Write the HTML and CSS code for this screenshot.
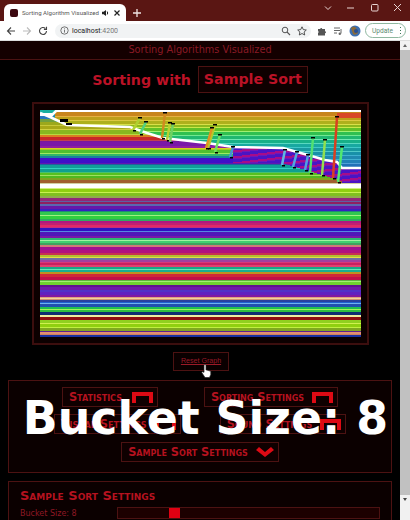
FILE: index.html
```html
<!DOCTYPE html>
<html lang="en">
<head>
  <meta charset="UTF-8" />
  <title>Sorting Algorithm Visualized</title>
  <link rel="stylesheet" href="styles.css">
</head>
<body>
  <div class="tabbar">
    <div class="tab">
      <span class="favicon"></span>
      <span class="tab-title">Sorting Algorithm Visualized</span>
      <svg class="tab-audio" width="8" height="8" viewBox="0 0 8 8"><path d="M0 2.8h1.6L4 1v6L1.6 5.200H0z" fill="#222"/><path d="M5.200 2.500q1 1.500 0 3" stroke="#222" fill="none"/></svg>
      <svg class="tab-close" width="8" height="8" viewBox="0 0 8 8"><path d="M1.500 1.500l5 5M6.500 1.500l-5 5" stroke="#222" stroke-width="1.200"/></svg>
    </div>
    <svg class="new-tab" width="10" height="10" viewBox="0 0 10 10"><path d="M5 1v8M1 5h8" stroke="#f0e4e2" stroke-width="1.300"/></svg>
    <div class="window-btns">
      <svg width="10" height="10" viewBox="0 0 10 10"><path d="M2 3.500l3 3 3-3" stroke="#e8d4d2" fill="none"/></svg>
      <svg width="10" height="10" viewBox="0 0 10 10"><path d="M1 5h7" stroke="#e8d4d2"/></svg>
      <svg width="10" height="10" viewBox="0 0 10 10"><rect x="1.500" y="1.500" width="6.500" height="6.500" rx="1" stroke="#e8d4d2" fill="none"/></svg>
      <svg width="10" height="10" viewBox="0 0 10 10"><path d="M1 1l7 7M8 1L1 8" stroke="#e8d4d2"/></svg>
    </div>
  </div>

  <div class="toolbar">
    <svg width="10" height="10" viewBox="0 0 10 10"><path d="M9 5H1.500M5 1.500L1.500 5 5 8.500" stroke="#444" stroke-width="1.100" fill="none"/></svg>
    <svg width="10" height="10" viewBox="0 0 10 10"><path d="M1 5h7.500M5 1.500L8.500 5 5 8.500" stroke="#bbb" stroke-width="1.100" fill="none"/></svg>
    <svg width="10" height="10" viewBox="0 0 10 10"><path d="M8.500 5A3.500 3.500 0 1 1 7.400 2.400M8.500 0.800v2.600H5.900" stroke="#444" stroke-width="1.100" fill="none"/></svg>
    <div class="omnibox">
      <svg width="9" height="9" viewBox="0 0 9 9"><circle cx="4.500" cy="4.500" r="3.700" stroke="#555" fill="none" stroke-width=".8"/><path d="M4.500 4v2.600M4.500 2.400v1" stroke="#555" stroke-width=".8"/></svg>
      <span class="url">localhost<span class="url-port">:4200</span></span>
      <svg class="omni-right" width="10" height="10" viewBox="0 0 10 10"><circle cx="4" cy="4" r="2.800" stroke="#555" fill="none"/><path d="M6 6l3 3" stroke="#555" stroke-width="1.100"/></svg>
      <svg width="10" height="10" viewBox="0 0 10 10"><path d="M5 .8l1.300 2.800 3 .4-2.200 2 .6 3L5 7.500 2.300 9l.6-3L.7 4l3-.4z" stroke="#444" fill="none" stroke-width=".9"/></svg>
    </div>
    <svg width="10" height="10" viewBox="0 0 10 10"><path d="M1 3h2.200a1 1 0 0 1 2 0H8v2.200a1 1 0 0 1 0 2V9.500H1V7a1.100 1.100 0 0 0 0-2z" fill="#555"/></svg>
    <svg width="10" height="10" viewBox="0 0 10 10"><path d="M1 2h6M1 4.500h6M1 7h3" stroke="#666"/><path d="M8 3v4.500" stroke="#666"/><circle cx="6.800" cy="7.800" r="1.200" fill="#666"/></svg>
    <svg width="12" height="12" viewBox="0 0 12 12"><circle cx="6" cy="6" r="5.500" fill="#3d6fb0"/><path d="M2 3q3-3 5 0t2 5q-3 3-5 1z" fill="#8a6a3a"/><circle cx="7" cy="6" r="2" fill="#2a4f90"/></svg>
    <div class="update">Update<span class="update-dots"></span></div>
  </div>

  <div class="viewport">
    <div class="page">
      <div class="site-title">Sorting Algorithms Visualized</div>

      <h1 class="sort-heading">Sorting with <span class="sort-name">Sample Sort</span></h1>

      <div class="graph-frame">
        <canvas id="graph" width="321" height="227"></canvas>
      </div>

      <div class="reset-row">
        <a class="reset-btn" href="#">Reset Graph</a>
      </div>

      <div class="panel toggles">
        <div class="toggle-row">
          <button class="toggle stats">Statistics <svg class="up" viewBox="0 0 21 11"><path d="M0 11V0h21v11h-4V4H4v7z"/></svg></button>
          <button class="toggle">Sorting Settings <svg class="up" viewBox="0 0 21 11"><path d="M0 11V0h21v11h-4V4H4v7z"/></svg></button>
        </div>
        <div class="toggle-row wide">
          <button class="toggle">Visual Settings <svg class="up" viewBox="0 0 21 11"><path d="M0 11V0h21v11h-4V4H4v7z"/></svg></button>
          <button class="toggle">Sound Settings <svg class="up" viewBox="0 0 21 11"><path d="M0 11V0h21v11h-4V4H4v7z"/></svg></button>
        </div>
        <div class="toggle-row">
          <button class="toggle">Sample Sort Settings <svg class="down" viewBox="0 0 18 10"><path d="M0 3l3-3 6 5 6-5 3 3-9 7z"/></svg></button>
        </div>
      </div>

      <div class="panel settings">
        <h3>Sample Sort Settings</h3>
        <div class="setting-row">
          <label>Bucket Size: 8</label>
          <div class="slider"><div class="thumb"></div></div>
        </div>
      </div>

      <div class="caption">Bucket Size: 8</div>
      <svg class="hand" width="11" height="14" viewBox="0 0 11 14"><path d="M3 1.500a1 1 0 0 1 2 0V6h.8l4 1.300v3.200L8.500 13.500H4L.7 8.500q.6-1.200 2.300-.2z" fill="#fff" stroke="#222" stroke-width=".7"/></svg>
    </div>

    <div class="scrollbar">
      <span class="arrow-up"></span>
      <div class="scroll-thumb"></div>
      <span class="arrow-down"></span>
    </div>
  </div>

  <script src="graph.js"></script>
</body>
</html>
```

FILE: styles.css
```css
* { box-sizing: border-box; }

html, body {
  height: 100%;
}

body {
  margin: 0;
  overflow: hidden;
  background: #000;
  font-family: 'DejaVu Sans', sans-serif;
  display: flex;
  flex-direction: column;
}

/* browser chrome */
.tabbar {
  height: 21px;
  flex: none;
  background: #5a1613;
  display: flex;
  align-items: flex-end;
  padding-left: 4px;
}

.tab {
  width: 122px;
  height: 17px;
  background: #fff;
  border-radius: 6px 6px 0 0;
  display: flex;
  align-items: center;
  padding-left: 6px;
}

.favicon {
  width: 8px;
  height: 8px;
  background: #3c0810;
  border-radius: 2px;
  margin-right: 4px;
}

.tab-title {
  font: 6.100px Roboto, sans-serif;
  color: #555;
  width: 80px;
  white-space: nowrap;
}

.tab-audio { margin-right: 3px; }

.new-tab {
  margin: 0 0 3px 6px;
}

.window-btns {
  margin-left: auto;
  align-self: flex-start;
  display: flex;
  gap: 13.500px;
  padding: 3px 7px 0 0;
}

.toolbar {
  height: 20px;
  flex: none;
  background: #fff;
  display: flex;
  align-items: center;
  gap: 6px;
  padding: 0 0 0 6px;
  border-bottom: 1px solid #ddd;
}

.toolbar > * {
  flex: none;
}

.omnibox {
  width: 256px;
  height: 14px;
  margin: 0 0 0 1px;
  padding: 0 4px 0 5px;
  background: #f1f3f4;
  border-radius: 7px;
  display: flex;
  align-items: center;
  gap: 3px;
}

.url {
  font: 7px Roboto, sans-serif;
  color: #222;
}

.url-port { color: #777; }

.omni-right { margin-left: auto; margin-right: 3px; }

.update {
  width: 41px;
  height: 15px;
  margin-left: -2px;
  border: 1px solid #8fb8a0;
  border-radius: 8px;
  font: 6.600px Roboto, sans-serif;
  color: #5a8a70;
  display: flex;
  align-items: center;
  padding-left: 6px;
}

.update-dots {
  width: 1.500px;
  height: 1.500px;
  margin-left: auto;
  margin-right: 4px;
  background: #3a7a58;
  box-shadow: 0 -3px #3a7a58, 0 3px #3a7a58;
}

/* page */
.viewport {
  flex: 1;
  min-height: 0;
  display: flex;
}

.page {
  position: relative;
  flex: 1;
  min-width: 0;
  background: #000;
  overflow: hidden;
}

.site-title {
  height: 19px;
  background: #140000;
  border-bottom: 1px solid #4c1212;
  text-align: center;
  font-size: 9.750px;
  line-height: 18px;
  color: #8a1a25;
}

.sort-heading {
  margin: 6px 0 9px;
  height: 27px;
  display: flex;
  justify-content: center;
  align-items: center;
  font-size: 14.200px;
  font-weight: bold;
  color: #bb1226;
  white-space: pre;
}

.sort-name {
  height: 27px;
  line-height: 25px;
  margin-left: 2px;
  padding: 0 5px;
  background: #0e0000;
  border: 1px solid #4c1212;
}

.graph-frame {
  width: 337px;
  margin: 0 auto;
  padding: 6px;
  background: #0c0000;
  border: 2px solid #3c0e0e;
}

#graph {
  display: block;
  filter: blur(0.35px);
}

.reset-row {
  display: flex;
  justify-content: center;
  margin-top: 7px;
  padding-left: 2px;
}

.reset-btn {
  width: 56px;
  height: 19px;
  border: 1px solid #4c1212;
  background: #0a0000;
  text-align: center;
  font: 7.100px/17px 'Liberation Sans', sans-serif;
  color: #9a1a28;
}

.panel {
  margin: 0 8px;
  background: #0b0000;
  border: 1px solid #4c1212;
}

.toggles {
  margin-top: 9px;
  height: 93px;
  padding-top: 6px;
}

.toggle-row {
  display: flex;
  justify-content: center;
  gap: 46px;
  margin-bottom: 7px;
}

.toggle-row.wide {
  gap: 39px;
  margin-bottom: 8px;
}

.toggle {
  height: 20px;
  padding: 0 4px 0 6px;
  display: flex;
  align-items: center;
  justify-content: space-between;
  gap: 8px;
  background: #0f0000;
  border: 1px solid #4c1212;
  font-family: 'DejaVu Sans', sans-serif;
  font-size: 11.400px;
  font-weight: bold;
  font-variant: small-caps;
  color: #b5121f;
  white-space: nowrap;
}

.toggle.stats { min-width: 96px; }
.wide .toggle { min-width: 126px; }

.toggle svg {
  fill: #dd0a14;
  flex: none;
}

.up { width: 21px; height: 11px; }
.down { width: 18px; height: 10px; }

.settings {
  margin-top: 8px;
  height: 60px;
  padding: 6px 11px;
}

.settings h3 {
  margin: 0 0 4px;
  font-size: 13px;
  line-height: 15px;
  font-weight: bold;
  font-variant: small-caps;
  color: #b5121f;
}

.setting-row {
  display: flex;
  align-items: center;
}

.setting-row label {
  width: 97px;
  font-size: 8px;
  color: #8e1824;
}

.slider {
  flex: 1;
  height: 12px;
  background: #1c0000;
  border: 1px solid #4c1212;
}

.thumb {
  width: 11px;
  height: 10px;
  margin-left: 51px;
  background: #e00012;
}

/* over the content */
.caption {
  position: absolute;
  left: 0;
  right: -11px;
  top: 349px;
  text-align: center;
  font-size: 45.800px;
  line-height: 56px;
  font-weight: bold;
  color: #fff;
  white-space: nowrap;
}

.hand {
  position: absolute;
  left: 201px;
  top: 323px;
}

.scrollbar {
  width: 10px;
  flex: none;
  background: #f1f1f1;
  display: flex;
  flex-direction: column;
  align-items: center;
}

.arrow-up, .arrow-down {
  flex: none;
  width: 0;
  height: 0;
  margin: 3px 0;
  border-left: 2.500px solid transparent;
  border-right: 2.500px solid transparent;
}

.arrow-up { border-bottom: 3px solid #666; }
.arrow-down { border-top: 3px solid #444; }

.scroll-thumb {
  width: 100%;
  height: 445px;
  background: #c1c1c1;
}
```

FILE: graph.js
```js
// rows of the bars as [height, colour]
const sortedRows = [
  [2, '#ffffff'], [4, '#c8851c'], [1, '#e6b040'], [3, '#bda01a'], [1, '#dcc840'],
  [3, '#aeb01c'], [1, '#d8e048'], [2, '#8cb81c'], [1, '#c8e848'], [3, '#60c028'],
  [1, '#a0f070'], [3, '#30c050'], [1, '#70e890'], [3, '#20b870'], [1, '#70e8b0'],
  [3, '#18b088'], [1, '#58d8c0'], [3, '#18a8a0'], [1, '#40c8c8'], [3, '#1898a0'],
  [1, '#50c8c8'], [3, '#1890a8'], [1, '#40b0d0'], [3, '#2088b0'], [1, '#40b0d0'],
  [3, '#2080b8'], [1, '#50a0d8'], [3, '#2070b8'], [1, '#40b0c8'], [3, '#1890a0'],
  [1, '#40d0a8'], [3, '#18a080']
];

const baseRows = [
  [12, '#1a90a8'], [3, '#9ca81c'], [1, '#c8c838'], [3, '#a8a818'], [1, '#d0d040'],
  [4, '#88b820'], [1, '#b8d840'], [2, '#d88020'], [3, '#c82828'], [1, '#c04050'],
  [1, '#7818a0'], [4, '#7a18a8'], [2, '#9020a0'], [1, '#d8d020'], [1, '#a8c820'],
  [3, '#50c030'], [1, '#a0e860'], [2, '#30b868'], [2, '#1880a0'], [5, '#4010c8'],
  [1, '#6018b0'], [1, '#2060a0'], [3, '#10a098'], [1, '#30d0c0'], [3, '#10a090'],
  [1, '#48c070'], [2, '#58c020'], [1, '#a0e060'], [2, '#50b820'], [2, '#80a020'],
  [3, '#a06030'], [1, '#d0d0a0'], [4, '#ffffff'], [1, '#d0f080'], [3, '#90d010'],
  [1, '#c8f050'], [3, '#80c020'], [2, '#90a850'], [3, '#902878'], [1, '#6060a0'],
  [2, '#902060'], [2, '#5868b0'], [3, '#6818a8'], [2, '#3820c0'], [1, '#208878'],
  [3, '#30c850'], [1, '#a0f080'], [3, '#30d040'], [2, '#30a860'], [2, '#b01880'],
  [2, '#c02070'], [2, '#e02868'], [1, '#c03080'], [3, '#3010c0'], [1, '#5888e0'],
  [4, '#5018b8'], [2, '#7818a8'], [2, '#30b870'], [1, '#a0f0a0'], [2, '#40d070'],
  [2, '#40a060'], [2, '#d07878'], [3, '#a01090'], [3, '#b01080'], [2, '#c83050'],
  [2, '#b0c030'], [1, '#e0e040'], [2, '#7070a0'], [2, '#a040a0'], [1, '#d83878'],
  [2, '#c82060'], [2, '#e04070'], [2, '#18a888'], [1, '#60e8b0'], [2, '#18b090'],
  [2, '#c09020'], [3, '#d02838'], [3, '#c01048'], [1, '#60b040'], [1, '#a0f070'],
  [3, '#70d030'], [2, '#601090'], [3, '#7018a8'], [2, '#5030c8'], [3, '#6020c0'],
  [2, '#8018a0'], [1, '#e0a080'], [1, '#f0d0a0'], [1, '#d09070'], [2, '#2840a0'],
  [1, '#2060d0'], [1, '#70b0f0'], [3, '#2050b0'], [2, '#20c050'], [1, '#a0f060'],
  [2, '#30c040'], [3, '#103070'], [2, '#f0f0a0'], [3, '#901010'], [3, '#90d020'],
  [1, '#d0f050'], [3, '#90d010'], [1, '#c0f040'], [3, '#80a820'], [1, '#602090'],
  [2, '#e09070'], [1, '#d08060'], [2, '#1830a0']
];

// the white front of the sorted part, in page x / y
const front = [
  [40, 113], [50, 117], [67, 125], [130, 127], [147, 133], [163, 138], [207, 143],
  [233, 147], [283, 148], [297, 152], [308, 155], [325, 160], [337, 162], [342, 168], [361, 168]
];

// slanted moved bars: x1, y1, x2, y2, colour
const bars = [
  [140, 118, 133, 130, '#b0d030'], [146, 122, 140, 134, '#50d080'],
  [165, 113, 162, 138, '#d08a20'], [170, 123, 167, 140, '#b8d030'],
  [173, 124, 170, 142, '#70d060'], [215, 125, 208, 148, '#b8c828'],
  [220, 135, 215, 152, '#70e060'], [212, 128, 206, 148, '#e09020'],
  [233, 147, 230, 157, '#4890d8'], [285, 150, 282, 165, '#60b8e0'],
  [297, 152, 293, 167, '#50a8e0'], [308, 155, 305, 170, '#50a0e0'],
  [313, 138, 310, 173, '#50e070'], [325, 140, 322, 175, '#90e050'],
  [342, 147, 338, 182, '#50e870'], [337, 117, 333, 178, '#d84020']
];

const OX = 40;
const OY = 110;
const ctx = document.getElementById('graph').getContext('2d');

function frontY(x) {
  for (let i = 1; i < front.length; i++) {
    if (x <= front[i][0]) {
      const [x0, y0] = front[i - 1];
      const [x1, y1] = front[i];
      return y0 + (y1 - y0) * (x - x0) / (x1 - x0);
    }
  }
  return 168;
}

function drawRows(target, rows) {
  let y = 0;
  rows.forEach(([h, colour]) => {
    target.fillStyle = colour;
    target.fillRect(0, y, 321, h);
    y += h;
  });
}

drawRows(ctx, baseRows);

// unsorted purple columns under the front, they get deeper to the right
for (let x = 233; x < 361; x++) {
  const bottom = x < 283 ? 163 : (x < 342 ? 163 + (x - 283) * 0.3 : 183);
  for (let y = 148; y < bottom; y++) {
    const i = Math.floor(y + (x - 233) * 0.12) % 6;
    ctx.fillStyle = i < 2 ? '#a80c88' : (i === 2 ? '#7018b8' : '#4a14c4');
    ctx.fillRect(x - OX, y - OY, 1, 1);
  }
}

// sorted rows on top, column by column down to the front
const sortedCanvas = document.createElement('canvas');
sortedCanvas.width = 321;
sortedCanvas.height = 227;
drawRows(sortedCanvas.getContext('2d'), sortedRows);
for (let x = 55; x < 361; x++) {
  const bottom = frontY(x) - OY;
  ctx.drawImage(sortedCanvas, x - OX, 0, 1, bottom, x - OX, 0, 1, bottom);
}

// top left corner
ctx.fillStyle = '#18b0a0';
ctx.fillRect(0, 0, 16, 3);
ctx.fillStyle = '#ffffff';
ctx.fillRect(0, 3, 12, 3);
ctx.fillStyle = '#2878c0';
ctx.fillRect(0, 6, 14, 3);
ctx.fillStyle = '#70a040';
ctx.fillRect(0, 9, 16, 3);

// top right piece
ctx.fillStyle = '#d84828';
ctx.fillRect(337 - OX, 3, 24, 5);

// white front
ctx.strokeStyle = '#ffffff';
ctx.lineWidth = 2.5;
ctx.beginPath();
front.forEach(([x, y], i) => {
  if (i === 0) ctx.moveTo(x - OX, y - OY);
  else ctx.lineTo(x - OX, y - OY);
});
ctx.stroke();

ctx.beginPath();
ctx.moveTo(57 - OX, 0);
ctx.lineTo(50 - OX, 7);
ctx.stroke();

ctx.fillStyle = '#000000';
ctx.fillRect(60 - OX, 119 - OY, 8, 3);
ctx.fillRect(66 - OX, 123 - OY, 6, 2);

// moved bars with a black cap
ctx.lineWidth = 2.5;
bars.forEach(([x1, y1, x2, y2, colour]) => {
  ctx.strokeStyle = colour;
  ctx.beginPath();
  ctx.moveTo(x1 - OX, y1 - OY);
  ctx.lineTo(x2 - OX, y2 - OY);
  ctx.stroke();
  ctx.fillStyle = '#000000';
  ctx.fillRect(x1 - OX - 2, y1 - OY - 1, 4, 1.5);
  ctx.fillRect(x2 - OX, y2 - OY, 3, 1.5);
});
```
